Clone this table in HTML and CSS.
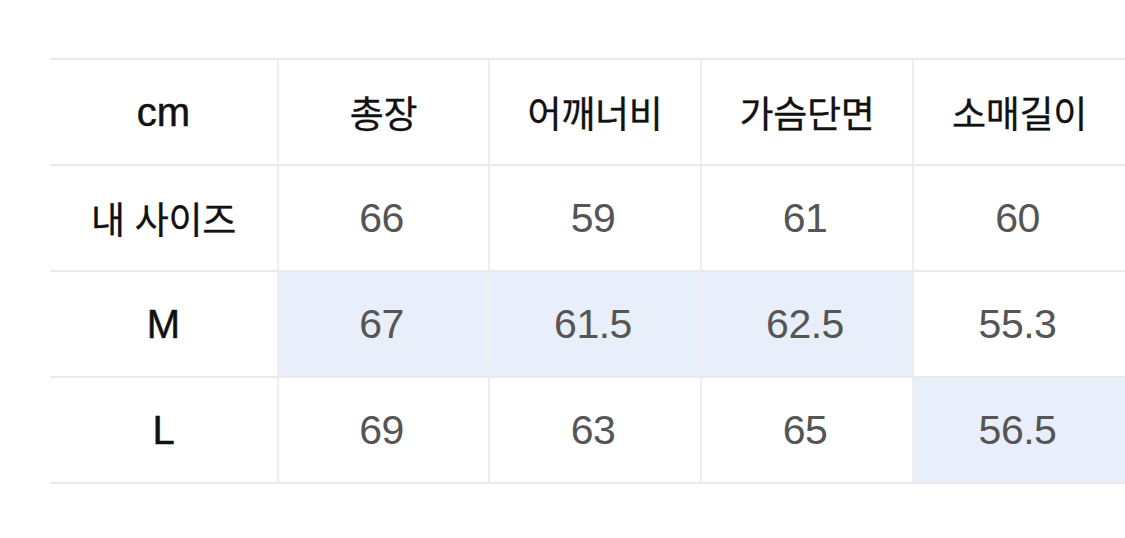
FILE: index.html
```html
<!DOCTYPE html>
<html lang="ko">
<head>
<meta charset="utf-8">
<title>사이즈 표</title>
<link rel="stylesheet" href="styles.css">
</head>
<body>
<div class="page">
  <div class="size-table">
    <div class="cell head latin first">cm</div>
    <div class="cell head">총장</div>
    <div class="cell head">어깨너비</div>
    <div class="cell head">가슴단면</div>
    <div class="cell head">소매길이</div>

    <div class="cell head first">내 사이즈</div>
    <div class="cell num">66</div>
    <div class="cell num">59</div>
    <div class="cell num">61</div>
    <div class="cell num">60</div>

    <div class="cell head latin first">M</div>
    <div class="cell num hl">67</div>
    <div class="cell num hl">61.5</div>
    <div class="cell num hl">62.5</div>
    <div class="cell num">55.3</div>

    <div class="cell head latin first last">L</div>
    <div class="cell num last">69</div>
    <div class="cell num last">63</div>
    <div class="cell num last">65</div>
    <div class="cell num hl last">56.5</div>
  </div>
</div>
</body>
</html>
```

FILE: styles.css
```css
html, body {
  margin: 0;
  padding: 0;
  background: #ffffff;
}

.page {
  padding: 58px 0 0 50px;
}

.size-table {
  display: grid;
  grid-template-columns: 227px 211px 212px 212px 213px;
  grid-template-rows: 106px 106px 106px 108px;
  width: 1075px;
}

.cell {
  display: flex;
  align-items: center;
  justify-content: center;
  border-top: 2px solid #e9e9e9;
  border-left: 2px solid #eeeeee;
  box-sizing: border-box;
  font-family: "Liberation Sans", "Noto Sans CJK KR", sans-serif;
}

.cell.first {
  border-left: none;
}

.cell.last {
  border-bottom: 2px solid #e9e9e9;
}

.head {
  font-family: "Noto Sans CJK KR", sans-serif;
  font-weight: 400;
  font-size: 37px;
  color: #111111;
  letter-spacing: -0.3px;
  -webkit-text-stroke: 0.3px #111111;
}

.head.latin {
  font-family: "Liberation Sans", sans-serif;
  font-weight: 400;
  font-size: 40px;
  letter-spacing: 0;
  -webkit-text-stroke: 0.5px #111111;
}

.num {
  font-size: 41px;
  color: #555555;
  letter-spacing: -0.5px;
  padding-right: 4px;
}

.hl {
  background: #e9eefb;
}
```
